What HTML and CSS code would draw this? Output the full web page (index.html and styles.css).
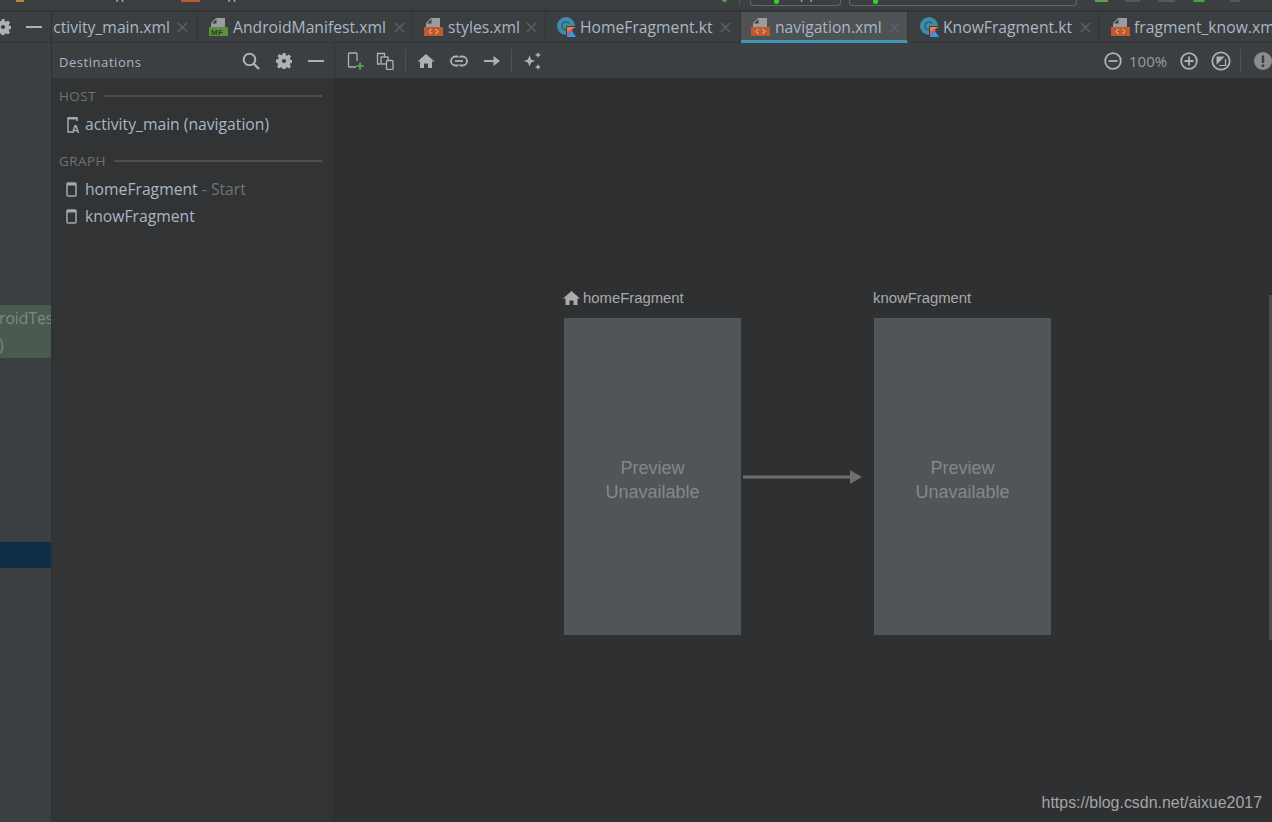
FILE: index.html
```html
<!DOCTYPE html>
<html lang="en">
<head>
<meta charset="utf-8">
<title>navigation.xml</title>
<link rel="stylesheet" href="styles.css">
</head>
<body>
<svg class="defs" width="0" height="0" aria-hidden="true">
  <defs>
    <symbol id="gear" viewBox="0 0 16 16"><path fill="#afb1b3" fill-rule="evenodd" d="M6.600 0h2.800l.4 2.200 1.300.6 1.900-1.300 2 2-1.300 1.900.6 1.300 2.200.4v2.800l-2.200.4-.6 1.300 1.300 1.900-2 2-1.900-1.300-1.300.6-.4 2.200H6.600l-.4-2.200-1.300-.6-1.900 1.300-2-2 1.300-1.900-.6-1.300L0 9.400V6.600l2.200-.4.6-1.300-1.300-1.900 2-2 1.900 1.300 1.300-.6zM8 5.900a2.100 2.100 0 1 0 0 4.200 2.100 2.100 0 0 0 0-4.200z"/></symbol>
    <symbol id="close" viewBox="0 0 11 11"><path stroke="#5f6264" stroke-width="1.300" d="M1 1l9 9M10 1l-9 9"/></symbol>
    <symbol id="xml" viewBox="0 0 20 18"><path fill="#9a9c9e" d="M7 0h9v9H2V5z"/><path fill="#3c3f41" d="M7.500 1v4.500H3z"/><rect y="9" width="19" height="9" fill="#c0592b"/><path fill="none" stroke="#e8d5c8" stroke-width="1" d="M7.500 11l-2.500 2.500 2.500 2.500M11.500 11l2.500 2.500-2.500 2.500"/></symbol>
    <symbol id="kt" viewBox="0 0 20 20"><circle cx="9" cy="9" r="9" fill="#3f8ba8"/><path fill="none" stroke="#2f6278" stroke-width="1.600" d="M12 6.500a4 4 0 1 0 0 5"/><path fill="#3c3f41" d="M9 9h11v11H9z"/><path fill="#e8853a" d="M10 10h9l-9 5z"/><path fill="#e0527a" d="M10 15l4-3 2 1-6 6z"/><path fill="#2a9ee8" d="M10 19l5-5 4 6h-9z"/></symbol>
    <symbol id="phone" viewBox="0 0 11 15"><rect x="1" y="1" width="9" height="13" rx="1" fill="none" stroke="#a4a9ad" stroke-width="1.500"/><rect x="1" y="1" width="9" height="2.500" fill="#a4a9ad"/></symbol>
  </defs>
</svg>

<div class="app">
  <header class="menubar">
    <span class="crumb-orange crumb-first"></span>
    <span class="crumb-text crumb-one">navigation</span>
    <span class="crumb-orange crumb-second"></span>
    <span class="crumb-text crumb-two">navigation</span>
    <span class="run-dot run-dot-solo"></span>
    <span class="menubar-sep"></span>
    <div class="combo combo-app"><span class="run-dot"></span><span class="crumb-text">app</span></div>
    <div class="combo combo-device"><span class="run-dot"></span></div>
    <span class="chip chip-green"></span>
    <span class="chip chip-a"></span>
    <span class="chip chip-b"></span>
    <span class="chip chip-round"></span>
    <span class="chip chip-c"></span>
  </header>

  <div class="workspace">
    <aside class="project">
      <div class="project-head">
        <svg class="gear-clipped" width="16" height="16"><use href="#gear"/></svg>
        <span class="minus"></span>
      </div>
      <div class="project-body">
        <div class="changed">
          <div class="changed-row changed-row-a">roidTest</div>
          <div class="changed-row changed-row-b">)</div>
        </div>
        <div class="selected"></div>
      </div>
    </aside>

    <div class="editor">
      <nav class="tabs">
        <div class="tab tab-first"><span class="tab-label">activity_main.xml</span><svg class="tab-close" width="11" height="11"><use href="#close"/></svg></div>
        <div class="tab tab-manifest">
          <svg class="tab-icon" width="20" height="18" viewBox="0 0 20 18"><path fill="#9a9c9e" d="M7 0h9v9H2V5z"/><path fill="#3c3f41" d="M7.500 1v4.500H3z"/><rect y="9" width="19" height="9" fill="#5e8f3c"/><text x="2" y="16.500" class="mf">MF</text></svg>
          <span class="tab-label">AndroidManifest.xml</span><svg class="tab-close" width="11" height="11"><use href="#close"/></svg></div>
        <div class="tab tab-styles"><svg class="tab-icon" width="20" height="18"><use href="#xml"/></svg><span class="tab-label">styles.xml</span><svg class="tab-close" width="11" height="11"><use href="#close"/></svg></div>
        <div class="tab tab-home"><svg class="tab-icon tab-icon-tight" width="20" height="20"><use href="#kt"/></svg><span class="tab-label">HomeFragment.kt</span><svg class="tab-close" width="11" height="11"><use href="#close"/></svg></div>
        <div class="tab tab-nav is-active"><svg class="tab-icon" width="20" height="18"><use href="#xml"/></svg><span class="tab-label">navigation.xml</span><svg class="tab-close" width="11" height="11"><use href="#close"/></svg></div>
        <div class="tab tab-know"><svg class="tab-icon tab-icon-tight" width="20" height="20"><use href="#kt"/></svg><span class="tab-label">KnowFragment.kt</span><svg class="tab-close" width="11" height="11"><use href="#close"/></svg></div>
        <div class="tab tab-last"><svg class="tab-icon tab-icon-tight" width="20" height="18"><use href="#xml"/></svg><span class="tab-label">fragment_know.xml</span></div>
      </nav>

      <div class="design">
        <section class="destinations">
          <div class="dest-head">
            <span class="dest-title">Destinations</span>
            <svg class="dest-search" width="18" height="18" viewBox="0 0 18 18"><circle cx="7.500" cy="7.500" r="5.800" fill="none" stroke="#afb1b3" stroke-width="2"/><path stroke="#afb1b3" stroke-width="2.400" d="M11.500 11.500l5.500 5.500"/></svg>
            <svg class="dest-gear" width="16" height="16"><use href="#gear"/></svg>
            <span class="minus dest-minus"></span>
          </div>
          <div class="dest-body">
            <div class="section-head section-host"><span>HOST</span><i></i></div>
            <div class="dest-item">
              <svg class="host-icon" width="15" height="17" viewBox="0 0 15 17"><path fill="none" stroke="#a4a9ad" stroke-width="1.500" d="M6 16H2V2h9v3"/><rect x="2" y="1" width="9" height="2.500" fill="#a4a9ad"/><text x="5.500" y="16.500" class="a-glyph">A</text></svg>
              <span>activity_main (navigation)</span>
            </div>
            <div class="section-head section-graph"><span>GRAPH</span><i></i></div>
            <div class="dest-item"><svg class="phone-icon" width="11" height="15"><use href="#phone"/></svg><span>homeFragment <em>- Start</em></span></div>
            <div class="dest-item"><svg class="phone-icon" width="11" height="15"><use href="#phone"/></svg><span>knowFragment</span></div>
          </div>
        </section>

        <section class="surface">
          <div class="toolbar">
            <button class="tool">
              <svg class="tool-add-icon" width="18" height="18" viewBox="0 0 18 18"><path fill="none" stroke="#afb1b3" stroke-width="1.300" d="M9 15H2.500a1 1 0 0 1-1-1V2a1 1 0 0 1 1-1H9a1 1 0 0 1 1 1v7"/><path stroke="#4fa14a" stroke-width="2.200" d="M13 10.500v7M9.500 14h7"/></svg>
            </button>
            <button class="tool">
              <svg width="18" height="18" viewBox="0 0 18 18"><path fill="none" stroke="#afb1b3" stroke-width="1.300" d="M4 12H1.500V1.500h7V5"/><rect x="5" y="5" width="7" height="7" fill="none" stroke="#afb1b3" stroke-width="1.300"/><rect x="10.500" y="8.500" width="6.500" height="9" rx="1" fill="#3c3f41" stroke="#afb1b3" stroke-width="1.300"/></svg>
            </button>
            <span class="tool-sep tool-sep-a"></span>
            <button class="tool tool-wide">
              <svg width="18" height="16" viewBox="0 0 18 16"><path fill="#afb1b3" d="M9 1l8.500 7.500H15V15h-4v-4.500H7V15H3V8.500H.5z"/></svg>
            </button>
            <button class="tool tool-wide">
              <svg width="18" height="12" viewBox="0 0 18 12"><rect x="1" y="1.500" width="16" height="9" rx="4.500" fill="none" stroke="#afb1b3" stroke-width="1.800"/><path stroke="#3c3f41" stroke-width="2" d="M9 0v1.500M9 10.500V12"/><path stroke="#afb1b3" stroke-width="1.800" d="M5 6h8"/></svg>
            </button>
            <button class="tool tool-wide">
              <svg width="16" height="12" viewBox="0 0 16 12"><path fill="#afb1b3" d="M0 5h9.500V1L16 6l-6.500 5V7H0z"/></svg>
            </button>
            <span class="tool-sep tool-sep-b"></span>
            <button class="tool tool-wide">
              <svg width="19" height="18" viewBox="0 0 19 18"><path fill="#afb1b3" d="M6.500 3.500l1.600 4 4 1.500-4 1.500-1.600 4-1.600-4L.9 9l4-1.500zM15 0l.9 2.100L18 3l-2.100.9L15 6l-.9-2.100L12 3l2.100-.9zM15 12l.9 2.100 2.100.9-2.100.9L15 18l-.9-2.100L12 15l2.100-.9z"/></svg>
            </button>
            <div class="zoom-group">
              <button class="tool">
                <svg width="18" height="18" viewBox="0 0 18 18"><circle cx="9" cy="9" r="7.800" fill="none" stroke="#afb1b3" stroke-width="1.800"/><path stroke="#afb1b3" stroke-width="1.800" d="M4.500 9h9"/></svg>
              </button>
              <span class="zoom-value">100%</span>
              <button class="tool tool-plus">
                <svg width="18" height="18" viewBox="0 0 18 18"><circle cx="9" cy="9" r="7.800" fill="none" stroke="#afb1b3" stroke-width="1.800"/><path stroke="#afb1b3" stroke-width="1.800" d="M4.500 9h9M9 4.500v9"/></svg>
              </button>
              <button class="tool tool-fit">
                <svg width="20" height="20" viewBox="0 0 20 20"><circle cx="10" cy="10" r="8.700" fill="none" stroke="#afb1b3" stroke-width="1.800"/><path fill="#afb1b3" d="M5.500 5.500h8.200l-8.200 8.200z"/><path fill="none" stroke="#afb1b3" stroke-width="1.200" d="M14.500 8v6.500H8"/></svg>
              </button>
              <span class="tool-sep tool-sep-c"></span>
              <svg class="warn" width="18" height="18" viewBox="0 0 18 18"><circle cx="9" cy="9" r="9" fill="#8a8c8e"/><path stroke="#3c3f41" stroke-width="2.400" d="M9 3.500v7.500M9 12.500v2.500"/></svg>
            </div>
          </div>

          <div class="canvas">
            <div class="node-label node-label-home">
              <svg width="17" height="14" viewBox="0 0 17 14"><path fill="#a9abad" d="M8.500 0L17 7.500h-2.500V14h-4V9.500h-4V14h-4V7.500H0z"/></svg>
              <span>homeFragment</span>
            </div>
            <div class="node-label node-label-know"><span>knowFragment</span></div>
            <div class="node node-home"><span>Preview<br>Unavailable</span></div>
            <div class="node node-know"><span>Preview<br>Unavailable</span></div>
            <svg class="edge" width="120" height="16" viewBox="0 0 120 16"><path stroke="#6d6e6f" stroke-width="3" d="M0 8h108"/><path fill="#6d6e6f" d="M107 1l12 7-12 7z"/></svg>
            <div class="scroll-thumb"></div>
            <div class="watermark">https://blog.csdn.net/aixue2017</div>
          </div>
        </section>
      </div>
    </div>
  </div>
</div>
</body>
</html>
```

FILE: styles.css
```css
html, body {
  margin: 0;
  padding: 0;
  height: 100%;
  background: #2f3032;
  overflow: hidden;
}

.defs {
  display: block;
  height: 0;
}

.app {
  width: 1272px;
  height: 822px;
  display: flex;
  flex-direction: column;
  overflow: hidden;
  font-family: "Open Sans", "Noto Sans", sans-serif;
  color: #a9b7c6;
}

/* Clipped menu bar along the very top */
.menubar {
  height: 10px;
  flex: none;
  display: flex;
  align-items: flex-start;
  background: #3c3f41;
  border-bottom: 2px solid #323436;
  overflow: hidden;
}

.crumb-orange {
  height: 2px;
  background: #c0592b;
  flex: none;
}

.crumb-first {
  width: 8px;
  margin-left: 16px;
  background: #b98a3c;
}

.crumb-second {
  width: 19px;
}

.crumb-text {
  font-size: 14px;
  line-height: 14px;
  color: #a9b7c6;
  margin-top: -12px;
  flex: none;
  white-space: nowrap;
  overflow: hidden;
}

.crumb-one {
  margin-left: 65px;
  width: 92px;
}

.crumb-two {
  margin-left: 1px;
  width: 105px;
}

.run-dot {
  display: block;
  width: 5px;
  height: 4px;
  border-radius: 0 0 3px 3px;
  background: #34d12c;
  flex: none;
}

.run-dot-solo {
  height: 2px;
  margin-left: 416px;
  background: #4aa045;
}

.menubar-sep {
  width: 1px;
  height: 4px;
  margin-left: 12px;
  background: #55585a;
  flex: none;
}

.combo {
  height: 6px;
  box-sizing: border-box;
  display: flex;
  align-items: flex-start;
  border: 1px solid #646668;
  border-top: 0;
  border-radius: 0 0 4px 4px;
  flex: none;
}

.combo-app {
  width: 91px;
  margin-left: 10px;
}

.combo-app .run-dot,
.combo-device .run-dot {
  margin-left: 23px;
}

.combo-app .crumb-text {
  margin-left: 12px;
  letter-spacing: 1px;
}

.combo-device {
  width: 228px;
  margin-left: 8px;
}

.chip {
  height: 2px;
  background: #55585a;
  flex: none;
}

.chip-green {
  width: 13px;
  margin-left: 18px;
  background: #5f9e4c;
}

.chip-a {
  width: 15px;
  margin-left: 17px;
}

.chip-b {
  width: 17px;
  margin-left: 18px;
}

.chip-round {
  width: 12px;
  margin-left: 18px;
  border-radius: 0 0 5px 5px;
  background: #4aa045;
}

.chip-c {
  width: 10px;
  margin-left: 25px;
}

.workspace {
  flex: 1;
  display: flex;
  min-height: 0;
}

/* Left project strip */
.project {
  width: 51px;
  flex: none;
  display: flex;
  flex-direction: column;
  background: #3c3f41;
  border-right: 1px solid #2f3133;
}

.project-head {
  height: 30px;
  flex: none;
  display: flex;
  align-items: center;
  border-bottom: 1px solid #323436;
  overflow: hidden;
}

.gear-clipped {
  margin-left: -5px;
  flex: none;
}

.minus {
  display: block;
  width: 16px;
  height: 2px;
  background: #afb1b3;
  flex: none;
}

.project-head .minus {
  margin-left: 15px;
}

.project-body {
  flex: 1;
  overflow: hidden;
}

.changed {
  margin-top: 262px;
  background: #4a5a4e;
  font-size: 15.700px;
  line-height: 26.500px;
  height: 53px;
  color: #7b8a80;
  white-space: nowrap;
}

.changed-row-a,
.changed-row-b {
  margin-left: -1px;
}

.selected {
  margin-top: 184px;
  height: 26px;
  background: #0f2d45;
}

/* Editor */
.editor {
  flex: 1;
  min-width: 0;
  display: flex;
  flex-direction: column;
}

.tabs {
  height: 31px;
  flex: none;
  display: flex;
  background: #3c3f41;
  overflow: hidden;
}

.tab {
  flex: none;
  display: flex;
  align-items: center;
  box-sizing: border-box;
  height: 31px;
  border-right: 1px solid #323436;
  border-bottom: 1px solid #323436;
  font-size: 15.700px;
  color: #a9b7c6;
  white-space: nowrap;
}

.tab-label {
  flex: none;
}

.tab-icon {
  flex: none;
  margin-right: 4px;
}

.tab-icon-tight {
  margin-right: 3px;
}

.tab-close {
  flex: none;
  margin-left: 7px;
}

.tab-first {
  width: 146px;
  justify-content: flex-end;
  padding-right: 9px;
}

.tab-manifest { width: 215px; padding-left: 11px; }
.tab-manifest .tab-close { margin-left: 8px; }
.tab-styles { width: 133px; padding-left: 11px; }
.tab-styles .tab-close { margin-left: 6px; }
.tab-home { width: 195px; padding-left: 11px; }
.tab-nav { width: 167px; padding-left: 10px; }
.tab-know { width: 191px; padding-left: 12px; }
.tab-know .tab-close { margin-left: 8px; }
.tab-last { padding-left: 12px; border-right: 0; }

.tab.is-active {
  background: #4e5254;
  border-bottom: 3px solid #3f97b4;
  padding-top: 2px;
}

.mf {
  font-family: "Liberation Sans", sans-serif;
  font-size: 8px;
  font-weight: 700;
  fill: #2d3f20;
  letter-spacing: .3px;
}

.design {
  flex: 1;
  min-height: 0;
  display: flex;
}

/* Destinations panel */
.destinations {
  width: 282px;
  flex: none;
  display: flex;
  flex-direction: column;
  background: #313335;
}

.dest-head {
  height: 35px;
  flex: none;
  display: flex;
  align-items: center;
  padding-left: 7px;
  background: #3c3f41;
}

.dest-title {
  width: 183px;
  margin-top: 2px;
  font-size: 13px;
  letter-spacing: .55px;
  color: #a9b7c6;
}

.dest-search {
  flex: none;
}

.dest-gear {
  flex: none;
  margin-left: 16px;
}

.dest-minus {
  margin-left: 16px;
}

.dest-body {
  padding: 8px 12px 0 7px;
}

.section-head {
  display: flex;
  align-items: center;
  gap: 8px;
  height: 20px;
  font-size: 13.500px;
  letter-spacing: .4px;
  color: #6f7375;
}

.section-head i {
  flex: 1;
  height: 2px;
  background: #4d4f51;
}

.section-graph {
  margin-top: 13.500px;
}

.dest-item {
  height: 27px;
  display: flex;
  align-items: center;
  font-size: 15.700px;
  color: #a9b7c6;
  padding-left: 7px;
  white-space: nowrap;
}

.section-head + .dest-item {
  margin-top: 4.500px;
}

.host-icon {
  flex: none;
  margin-right: 4px;
}

.phone-icon {
  flex: none;
  margin-right: 8px;
}

.dest-item em {
  font-style: normal;
  color: #6f7375;
}

.a-glyph {
  font-family: "Liberation Sans", sans-serif;
  font-size: 11px;
  font-weight: 700;
  fill: #a4a9ad;
}

/* Design surface */
.surface {
  flex: 1;
  min-width: 0;
  display: flex;
  flex-direction: column;
}

.toolbar {
  height: 35px;
  flex: none;
  display: flex;
  align-items: center;
  box-sizing: border-box;
  padding-left: 5px;
  background: #3c3f41;
  border-left: 1px solid #323436;
  overflow: hidden;
}

.tool {
  width: 30px;
  height: 30px;
  flex: none;
  padding: 0;
  border: 0;
  background: none;
  display: flex;
  align-items: center;
  justify-content: center;
}

.tool-add-icon {
  margin-left: 2px;
}

.tool-wide {
  width: 33px;
}

.tool-sep {
  width: 1px;
  height: 24px;
  flex: none;
  background: #505355;
}

.tool-sep-a {
  margin: 0 3px 0 5px;
}

.tool-sep-b {
  margin: 0 4px 0 3px;
}

.zoom-group {
  margin-left: auto;
  display: flex;
  align-items: center;
}

.zoom-value {
  width: 43px;
  flex: none;
  font-size: 15px;
  color: #9a9da0;
  margin-left: 1px;
}

.tool-plus,
.tool-fit {
  margin-left: 2px;
}

.tool-sep-c {
  margin-left: 4px;
  margin-right: 13px;
}

.warn {
  flex: none;
}

/* Free canvas: positions here are the diagram itself */
.canvas {
  flex: 1;
  position: relative;
  background: #2f3032;
  overflow: hidden;
  font-family: "Liberation Sans", sans-serif;
}

.node-label {
  position: absolute;
  top: 211px;
  display: flex;
  align-items: center;
  height: 18px;
  font-size: 14.850px;
  color: #a8aaac;
}

.node-label-home {
  left: 229px;
  gap: 3px;
}

.node-label-know {
  left: 539px;
}

.node {
  position: absolute;
  top: 240px;
  width: 177px;
  height: 317px;
  box-sizing: border-box;
  padding-top: 6px;
  display: flex;
  align-items: center;
  justify-content: center;
  text-align: center;
  background: #505557;
  color: #84878a;
  font-size: 18px;
  line-height: 24px;
}

.node-home {
  left: 230px;
}

.node-know {
  left: 540px;
}

.edge {
  position: absolute;
  left: 409px;
  top: 391px;
}

.scroll-thumb {
  position: absolute;
  right: 0;
  top: 217px;
  width: 3px;
  height: 345px;
  background: #4a4c4e;
}

.watermark {
  position: absolute;
  right: 10px;
  bottom: 9px;
  font-size: 15.930px;
  line-height: 20px;
  color: #a4a5a6;
}
```
